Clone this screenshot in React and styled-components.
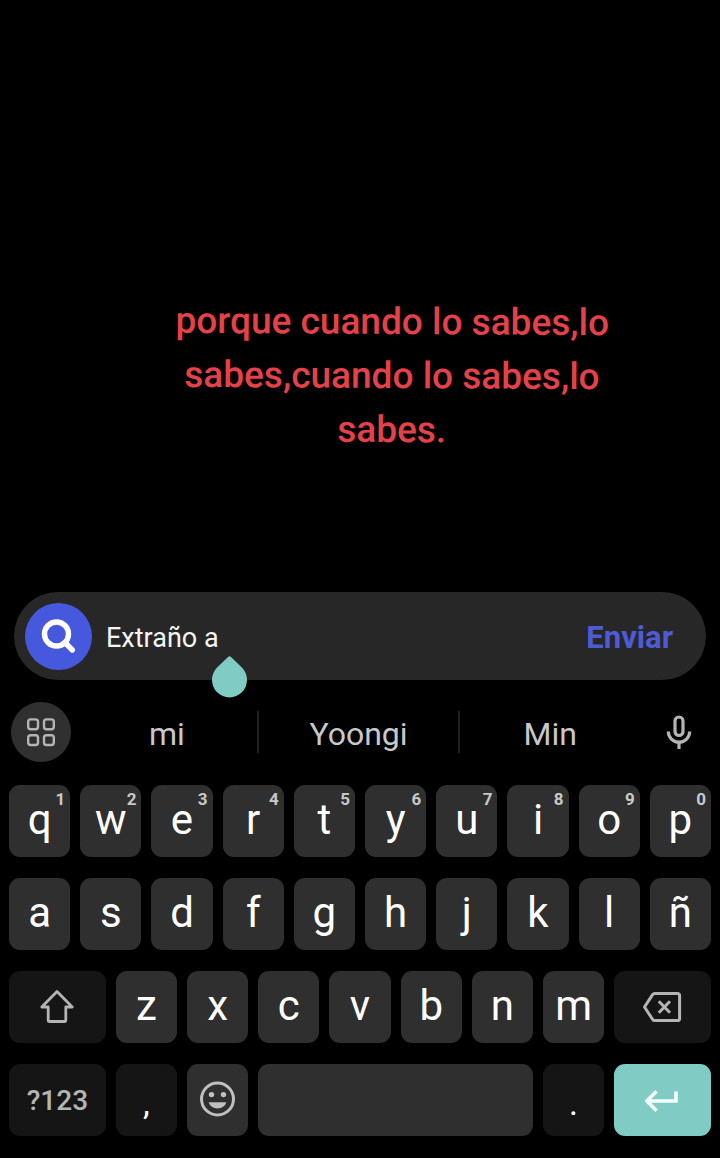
import React, { useState } from 'react'
import styled, { createGlobalStyle } from 'styled-components'

const GlobalStyle = createGlobalStyle`
    * {
        box-sizing: border-box;
    }

    body {
        margin: 0;
        background: #000;
        font-family: Roboto, "Liberation Sans", sans-serif;
    }

    button, input {
        font-family: inherit;
        margin: 0;
        padding: 0;
        border: none;
        background: none;
        outline: none;
    }
`;

const Screen = styled.div`
    display: flex;
    flex-direction: column;
    min-height: 100vh;
    padding-bottom: 22px;
`;

const Stage = styled.main`
    flex: 1;
    padding: 295px 96px 110px 160px;
`;

const Caption = styled.p`
    margin: 0;
    color: #e54148;
    font-size: 37px;
    font-weight: 500;
    line-height: 54px;
    text-align: center;
    transform: rotate(0.3deg);
`;

const AnswerBar = styled.form`
    position: relative;
    display: flex;
    align-items: center;
    height: 88px;
    margin: 0 14px;
    padding: 0 33px 0 11px;
    border-radius: 44px;
    background: #272727;
`;

const SearchBadge = styled.span`
    display: flex;
    flex: none;
    width: 67px;
    height: 67px;
    border-radius: 50%;
    background: #4659dd;
`;

const Field = styled.input`
    flex: 1;
    min-width: 0;
    height: 64px;
    margin-left: 14px;
    padding-top: 4px;
    color: #f5f5f5;
    font-size: 27px;
`;

const Send = styled.button`
    padding-top: 2px;
    color: #4f5bd5;
    font-size: 31px;
    font-weight: 700;
`;

const CursorHandle = styled.svg`
    position: absolute;
    left: 198px;
    top: 64px;
`;

const Suggestions = styled.div`
    display: flex;
    align-items: center;
    height: 60px;
    margin: 22px 0 23px;
    padding-left: 11px;
`;

const RoundButton = styled.button`
    display: flex;
    flex: none;
    width: 60px;
    height: 60px;
    margin-right: 6px;
    border-radius: 50%;
    background: #303030;
`;

const Suggestion = styled.button`
    flex: ${props => props.$grow};
    height: 42px;
    padding-top: 4px;
    color: #c8c8c8;
    font-size: 32px;
    line-height: 38px;

    & + & {
        border-left: 2px solid #202020;
    }
`;

const MicButton = styled.button`
    display: flex;
    flex: none;
    justify-content: center;
    width: 80px;
    padding-right: 2px;
`;

const Keys = styled.div`
    display: grid;
    grid-template-columns: repeat(20, 1fr);
    grid-auto-rows: 72px;
    gap: 21px 10px;
    padding: 0 9px;
`;

const tones = {
    letter: { background: '#2f2f2f', color: '#fff' },
    dark: { background: '#151515', color: '#fff' },
    accent: { background: '#80cbc4', color: '#fff' },
};

const Key = styled.button`
    position: relative;
    display: flex;
    align-items: center;
    justify-content: center;
    grid-column: span ${props => props.$span || 2};
    padding-bottom: 2px;
    border-radius: 11px;
    background: ${props => tones[props.$tone || 'letter'].background};
    color: ${props => tones[props.$tone || 'letter'].color};
    font-size: 42px;
    line-height: 48px;
`;

const Hint = styled.span`
    position: absolute;
    top: 4px;
    right: 5px;
    color: #c8c8c8;
    font-size: 17px;
    font-weight: 700;
    line-height: 20px;
`;

const ModeLabel = styled.span`
    padding-top: 3px;
    color: #b4b4b4;
    font-size: 28px;
    font-weight: 500;
`;

const Mark = styled.span`
    padding-top: 8px;
    font-size: 34px;
`;

const SearchIcon = () => (
    <svg width="67" height="67" viewBox="0 0 67 67" fill="none" stroke="#fff" strokeWidth="5.4" strokeLinecap="round">
        <circle cx="31.5" cy="31" r="12" />
        <path d="M40 39.5L47.3 47" />
    </svg>
)

const AppsIcon = () => (
    <svg width="60" height="60" viewBox="0 0 60 60" fill="none" stroke="#b4b4b4" strokeWidth="2.4">
        <rect x="17.2" y="17.4" width="9.8" height="9.8" rx="2.4" />
        <rect x="33" y="17.4" width="9.8" height="9.8" rx="2.4" />
        <rect x="17.2" y="33.2" width="9.8" height="9.8" rx="2.4" />
        <rect x="33" y="33.2" width="9.8" height="9.8" rx="2.4" />
    </svg>
)

const MicIcon = () => (
    <svg width="28" height="36" viewBox="0 0 28 36" fill="none" stroke="#b4b4b4" strokeWidth="3.2">
        <rect x="10" y="3" width="8" height="18.5" rx="4" />
        <path d="M3.3 17.5a10.7 10.7 0 0 0 21.4 0M14 28v7" />
    </svg>
)

const ShiftIcon = () => (
    <svg width="36" height="36" viewBox="0 0 36 36" fill="none" stroke="#b4b4b4" strokeWidth="2.8" strokeLinejoin="round">
        <path d="M18 3.5L33.2 19H26.8V32.5Q26.8 33.5 25.8 33.5H10.2Q9.2 33.5 9.2 32.5V19H2.8Z" />
    </svg>
)

const BackspaceIcon = () => (
    <svg width="40" height="34" viewBox="0 0 40 34" fill="none" stroke="#b4b4b4" strokeWidth="3" strokeLinejoin="round">
        <path d="M1.5 18L9.6 5.6Q10.4 4.4 11.8 4.4H34.4Q36.6 4.4 36.6 6.6V29.4Q36.6 31.6 34.4 31.6H11.8Q10.4 31.6 9.6 30.4Z" />
        <path d="M15.8 12.2L27 23.8M27 12.2L15.8 23.8" />
    </svg>
)

const EmojiIcon = () => (
    <svg width="36" height="36" viewBox="0 0 36 36" fill="#c0c0c0">
        <circle cx="17.5" cy="18" r="16" fill="none" stroke="#c0c0c0" strokeWidth="3" />
        <circle cx="11.5" cy="13.6" r="2.7" />
        <circle cx="23.5" cy="13.6" r="2.7" />
        <path d="M8.7 21.2H26.3C25.1 25.2 21.7 27.4 17.5 27.4S9.9 25.2 8.7 21.2Z" />
    </svg>
)

const EnterIcon = () => (
    <svg width="36" height="28" viewBox="0 0 36 28" fill="none" stroke="#f4fffe" strokeWidth="3.6">
        <path d="M31 6.5V16H1.8M11.6 6.2L1.8 16L11.6 25.8" />
    </svg>
)

const topRow = ['q', 'w', 'e', 'r', 't', 'y', 'u', 'i', 'o', 'p'];
const homeRow = ['a', 's', 'd', 'f', 'g', 'h', 'j', 'k', 'l', 'ñ'];
const bottomRow = ['z', 'x', 'c', 'v', 'b', 'n', 'm'];

export default function App() {
    const [text, setText] = useState('Extraño a');
    const type = (char) => setText(text + char);

    return (
        <Screen>
            <GlobalStyle />
            <Stage>
                <Caption>porque cuando lo sabes,lo sabes,cuando lo sabes,lo sabes.</Caption>
            </Stage>
            <AnswerBar onSubmit={e => e.preventDefault()}>
                <SearchBadge><SearchIcon /></SearchBadge>
                <Field aria-label="Respuesta" value={text} onChange={e => setText(e.target.value)} />
                <Send type="submit">Enviar</Send>
                <CursorHandle width="35" height="42" viewBox="0 0 35 42" fill="#80cbc4">
                    <path d="M16.3 0.8Q17.5 -0.4 18.7 0.8L29.9 11.6A17.5 17.5 0 1 1 5.1 11.6Z" />
                </CursorHandle>
            </AnswerBar>
            <Suggestions>
                <RoundButton aria-label="Menú"><AppsIcon /></RoundButton>
                <Suggestion $grow={9}>mi</Suggestion>
                <Suggestion $grow={10}>Yoongi</Suggestion>
                <Suggestion $grow={9}>Min</Suggestion>
                <MicButton aria-label="Voz"><MicIcon /></MicButton>
            </Suggestions>
            <Keys>
                {topRow.map((char, i) => (
                    <Key key={char} onClick={() => type(char)}>
                        {char}
                        <Hint>{(i + 1) % 10}</Hint>
                    </Key>
                ))}
                {homeRow.map(char => (
                    <Key key={char} onClick={() => type(char)}>{char}</Key>
                ))}
                <Key $span={3} $tone="dark" aria-label="Mayúsculas"><ShiftIcon /></Key>
                {bottomRow.map(char => (
                    <Key key={char} onClick={() => type(char)}>{char}</Key>
                ))}
                <Key $span={3} $tone="dark" aria-label="Borrar" onClick={() => setText(text.slice(0, -1))}>
                    <BackspaceIcon />
                </Key>
                <Key $span={3} $tone="dark"><ModeLabel>?123</ModeLabel></Key>
                <Key $tone="dark" onClick={() => type(',')}><Mark>,</Mark></Key>
                <Key aria-label="Emojis"><EmojiIcon /></Key>
                <Key $span={8} aria-label="Espacio" onClick={() => type(' ')} />
                <Key $tone="dark" onClick={() => type('.')}><Mark>.</Mark></Key>
                <Key $span={3} $tone="accent" aria-label="Intro"><EnterIcon /></Key>
            </Keys>
        </Screen>
    )
}
